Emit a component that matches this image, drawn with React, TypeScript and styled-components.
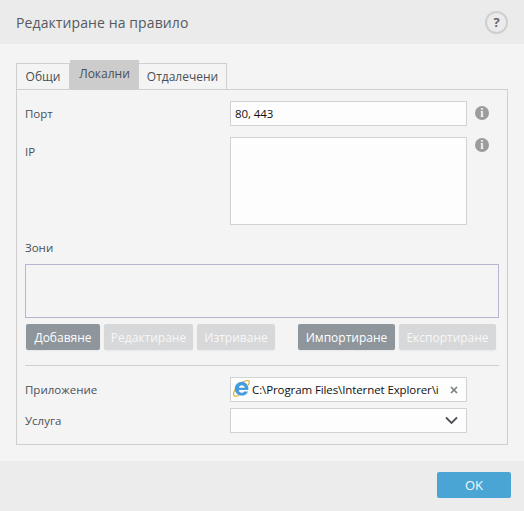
import { createGlobalStyle, styled } from 'styled-components';

const GlobalStyle = createGlobalStyle`
  html, body {
    margin: 0;
    padding: 0;
    background: #f4f4f4;
  }
  * {
    box-sizing: border-box;
  }
`;

const Dialog = styled.div`
  width: 524px;
  height: 511px;
  display: flex;
  flex-direction: column;
  background: #f4f4f4;
  color: #4a4f55;
  font-family: 'Open Sans', 'Noto Sans', sans-serif;
  font-size: 12px;
  overflow: hidden;
`;

const Header = styled.header`
  height: 44px;
  flex: none;
  display: flex;
  align-items: center;
  justify-content: space-between;
  padding: 0 16px 0 16px;
  background: #ebebeb;
`;

const Title = styled.h1`
  margin: 0;
  font-size: 14px;
  font-weight: 400;
  letter-spacing: 0.1px;
  color: #555a60;
`;

const HelpButton = styled.div`
  width: 23px;
  height: 23px;
  border: 2px solid #cfcfcf;
  border-radius: 50%;
  display: flex;
  align-items: center;
  justify-content: center;
  font-size: 13px;
  font-weight: 700;
  color: #666;
`;

const Body = styled.main`
  flex: 1;
  padding: 16px 16px 16px;
  display: flex;
  flex-direction: column;
`;

const Tabs = styled.nav`
  display: flex;
  align-items: flex-end;
  height: 29px;
  flex: none;
`;

const Tab = styled.div<{ $active?: boolean; $width: number }>`
  width: ${p => p.$width}px;
  height: ${p => (p.$active ? 29 : 26)}px;
  display: flex;
  align-items: center;
  justify-content: center;
  padding-bottom: ${p => (p.$active ? 3 : 0)}px;
  background: ${p => (p.$active ? '#cccccc' : '#f4f4f4')};
  border: ${p => (p.$active ? 'none' : '1px solid #cfcfcf')};
  border-left: none;
  border-bottom: none;
  font-size: 12px;
  &:first-child {
    border-left: 1px solid #cfcfcf;
  }
`;

const Panel = styled.section`
  flex: 1;
  width: 492px;
  border: 1px solid #cfcfcf;
  padding: 11px 8px 0;
  display: flex;
  flex-direction: column;
`;

const FieldRow = styled.div<{ $height: number; $gap?: number }>`
  display: grid;
  grid-template-columns: 205px 237px 30px;
  height: ${p => p.$height}px;
  margin-bottom: ${p => p.$gap ?? 0}px;
`;

const Label = styled.label<{ $drop?: number }>`
  padding-top: ${p => p.$drop ?? 1}px;
  line-height: 24px;
  font-size: 11.5px;
`;

const Input = styled.div`
  height: 100%;
  border: 1px solid #d2d2d2;
  background: #fdfdfd;
  color: #111;
  font-size: 11.5px;
  letter-spacing: -0.1px;
  line-height: 23px;
  padding: 0 4px;
  display: flex;
  align-items: center;
  position: relative;
`;

const InfoIcon = styled.div<{ $top: number }>`
  width: 14px;
  height: 14px;
  margin: ${p => p.$top}px 0 0 8px;
  border-radius: 50%;
  background: #9c9c9c;
  color: #f4f4f4;
  font-family: 'Liberation Serif', serif;
  font-size: 12px;
  font-weight: 700;
  line-height: 14px;
  text-align: center;
`;

const SectionLabel = styled.div`
  margin-top: 15px;
  line-height: 16px;
  font-size: 11.5px;
`;

const ZoneList = styled.div`
  margin-top: 8px;
  height: 54px;
  width: 474px;
  border: 1px solid #b9b5d0;
`;

const Toolbar = styled.div`
  margin: 6px 0 0 1px;
  display: flex;
  gap: 4px;
`;

const ActionButton = styled.button<{ $enabled?: boolean; $width: number; $push?: number }>`
  width: ${p => p.$width}px;
  height: 26px;
  margin-left: ${p => p.$push ?? 0}px;
  padding: 0;
  border: none;
  border-radius: 2px;
  background: ${p => (p.$enabled ? '#8e969c' : '#d7d8d9')};
  color: ${p => (p.$enabled ? '#ffffff' : '#f7f7f7')};
  font-family: inherit;
  font-size: 12px;
  box-shadow: 0 1px 2px rgba(0, 0, 0, 0.05);
`;

const Divider = styled.hr`
  width: 474px;
  margin: 15px 0 11px;
  border: none;
  border-top: 1px solid #cfcfcf;
`;

const PathText = styled.span`
  margin-left: 17px;
  white-space: nowrap;
`;

const IconSlot = styled.span`
  position: absolute;
  left: 2px;
  top: 2px;
  width: 17px;
  height: 17px;
`;

const Clear = styled.span`
  position: absolute;
  right: 7px;
  top: 7px;
  width: 10px;
  height: 10px;
  display: flex;
`;

const Caret = styled.span`
  position: absolute;
  right: 8px;
  top: 7px;
  width: 13px;
  height: 9px;
  display: flex;
`;

const Footer = styled.footer`
  height: 50px;
  flex: none;
  display: flex;
  justify-content: flex-end;
  align-items: flex-start;
  padding: 11px 13px 0 0;
  background: #ececec;
`;

const OkButton = styled.button`
  width: 74px;
  height: 26px;
  border: none;
  border-radius: 2px;
  background: #4ba5d4;
  color: #f2f8fb;
  font-family: inherit;
  font-size: 13px;
`;

const IeIcon = () => (
  <svg viewBox="0 0 17 17" width="17" height="17">
    <path
      d="M9 2.600C12.500 .6 15.300 .2 16 1.200c.6.900-.1 2.800-1 4.100M2 9.500C.6 12.300.3 14.800 1.200 15.700c1 .9 3.400.2 5-.8"
      fill="none"
      stroke="#dfae35"
      strokeWidth="1.2"
    />
    <path
      d="M9 1.800c-3.900 0-7.200 3.200-7.200 7 0 3.900 3 6.800 6.900 6.800 3 0 5.400-1.500 6.300-4.200h-3.800c-.5.900-1.400 1.400-2.500 1.400-1.600 0-2.800-1.100-2.900-2.800h9.500C16 5.500 13 1.800 9 1.800zM5.900 7.800c.2-1.500 1.400-2.600 3-2.600 1.500 0 2.700 1 2.900 2.600z"
      fill="#469ade"
      fillRule="evenodd"
    />
  </svg>
);

const ClearIcon = () => (
  <svg viewBox="0 0 10 10" width="10" height="10">
    <path d="M2 2l6 6M8 2l-6 6" stroke="#7b8084" strokeWidth="1.7" />
  </svg>
);

const CaretIcon = () => (
  <svg viewBox="0 0 13 9" width="13" height="9">
    <path d="M1 1.500l5.500 5.500L12 1.500" fill="none" stroke="#4d5155" strokeWidth="1.8" />
  </svg>
);

export default function App() {
  return (
    <>
      <GlobalStyle />
      <Dialog>
        <Header>
          <Title>Редактиране на правило</Title>
          <HelpButton>?</HelpButton>
        </Header>
        <Body>
          <Tabs>
            <Tab $width={54}>Общи</Tab>
            <Tab $width={69} $active>
              Локални
            </Tab>
            <Tab $width={88}>Отдалечени</Tab>
          </Tabs>
          <Panel>
            <FieldRow $height={24} $gap={12}>
              <Label>Порт</Label>
              <Input>80, 443</Input>
              <InfoIcon $top={5}>i</InfoIcon>
            </FieldRow>
            <FieldRow $height={88}>
              <Label $drop={3}>IP</Label>
              <Input />
              <InfoIcon $top={1}>i</InfoIcon>
            </FieldRow>
            <SectionLabel>Зони</SectionLabel>
            <ZoneList />
            <Toolbar>
              <ActionButton $enabled $width={74}>
                Добавяне
              </ActionButton>
              <ActionButton $width={89}>Редактиране</ActionButton>
              <ActionButton $width={78}>Изтриване</ActionButton>
              <ActionButton $enabled $width={97} $push={19}>
                Импортиране
              </ActionButton>
              <ActionButton $width={97}>Експортиране</ActionButton>
            </Toolbar>
            <Divider />
            <FieldRow $height={25} $gap={6}>
              <Label>Приложение</Label>
              <Input>
                <IconSlot>
                  <IeIcon />
                </IconSlot>
                <PathText>C:\Program Files\Internet Explorer\i</PathText>
                <Clear>
                  <ClearIcon />
                </Clear>
              </Input>
            </FieldRow>
            <FieldRow $height={24}>
              <Label>Услуга</Label>
              <Input>
                <Caret>
                  <CaretIcon />
                </Caret>
              </Input>
            </FieldRow>
          </Panel>
        </Body>
        <Footer>
          <OkButton>OK</OkButton>
        </Footer>
      </Dialog>
    </>
  );
}
